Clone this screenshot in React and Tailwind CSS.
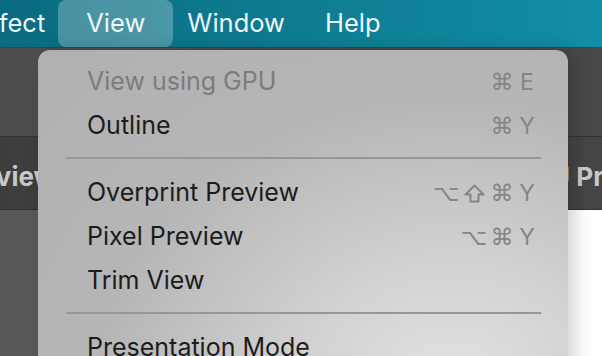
import React from "react";

const FONT = { fontFamily: "Inter, 'Liberation Sans', 'DejaVu Sans', sans-serif" };

const ITEMS = [
  { label: "View using GPU", keys: ["⌘"], key: "E", disabled: true },
  { label: "Outline", keys: ["⌘"], key: "Y" },
  { sep: true },
  { label: "Overprint Preview", keys: ["⌥", "⇧", "⌘"], key: "Y" },
  { label: "Pixel Preview", keys: ["⌥", "⌘"], key: "Y" },
  { label: "Trim View" },
  { sep: true },
  { label: "Presentation Mode" },
];

function ShiftIcon() {
  return (
    <svg width="21" height="19" viewBox="0 0 21 19" className="mx-auto">
      <path
        d="M10.5 1.5 L19.5 10.5 H14.5 V17.5 H6.5 V10.5 H1.5 Z"
        fill="none"
        stroke="#858585"
        strokeWidth="2"
        strokeLinejoin="round"
      />
    </svg>
  );
}

function Shortcut({ keys = [], k }) {
  if (!k) return null;
  return (
    <div
      className="flex items-center text-[23px] text-[#858585]"
      style={{ fontFamily: "'DejaVu Sans', Inter, sans-serif" }}
    >
      {keys.map((m, i) => (
        <span key={i} className="w-[28px] flex justify-center leading-none">
          {m === "⇧" ? <ShiftIcon /> : m}
        </span>
      ))}
      <span className="ml-[2px] w-[18px] text-center leading-none" style={FONT}>
        {k}
      </span>
    </div>
  );
}

function MenuRow({ item }) {
  if (item.sep) {
    return (
      <div className="h-[23px] pt-[9px] pl-[28px] pr-[27px]">
        <div className="h-[2px] bg-[#979797]" />
      </div>
    );
  }
  return (
    <div className="h-[44px] flex items-center justify-between pl-[49px] pr-[32px]">
      <span
        className={`text-[25px] ${item.disabled ? "text-[#7c7c7c]" : "text-[#1c1c1c]"}`}
        style={FONT}
      >
        {item.label}
      </span>
      <Shortcut keys={item.keys} k={item.key} />
    </div>
  );
}

export default function App() {
  return (
    <div className="relative w-[602px] h-[356px] overflow-hidden bg-[#575757]" style={FONT}>
      {/* menu bar */}
      <div className="h-[48px] flex items-stretch bg-gradient-to-r from-[#0b6b80] to-[#118ea5] border-b border-[#0a5566] text-[25.5px] text-[#eef7f9]">
        <div className="flex items-center -ml-[25px] pr-[13px]">Effect</div>
        <div className="flex items-center px-[28px] rounded-[8px] bg-white/25">View</div>
        <div className="flex items-center px-[14px]">Window</div>
        <div className="flex items-center px-[26px]">Help</div>
      </div>

      {/* toolbar */}
      <div className="h-[89px] bg-gradient-to-r from-[#4e4e4e] to-[#484848] border-b border-[#333]" />

      {/* tab band */}
      <div className="h-[73px] flex items-center justify-between pt-[6px] bg-gradient-to-r from-[#3d3d3d] to-[#454545] border-b border-[#303030] text-[26px] font-bold text-[#c9c9c9]">
        <span className="-ml-[46px]">Preview</span>
        <span className="-mr-[76px]">GPU Preview</span>
      </div>

      {/* canvas area */}
      <div className="flex h-[146px]">
        <div className="w-[300px] bg-[#585858]" />
        <div className="flex-1 bg-gradient-to-r from-[#e9e9e9] via-[#fafafa] to-white" />
      </div>

      {/* dropdown menu */}
      <div className="absolute left-[38px] top-[50px] w-[530px] h-[360px] rounded-[12px] pt-[10px] shadow-[6px_0_18px_rgba(0,0,0,0.18)] bg-[radial-gradient(ellipse_at_78%_92%,#e2e2e2_0%,#d2d2d2_25%,#b6b6b6_60%,#b0b0b0_100%)]">
        {ITEMS.map((item, i) => (
          <MenuRow key={i} item={item} />
        ))}
      </div>
    </div>
  );
}
